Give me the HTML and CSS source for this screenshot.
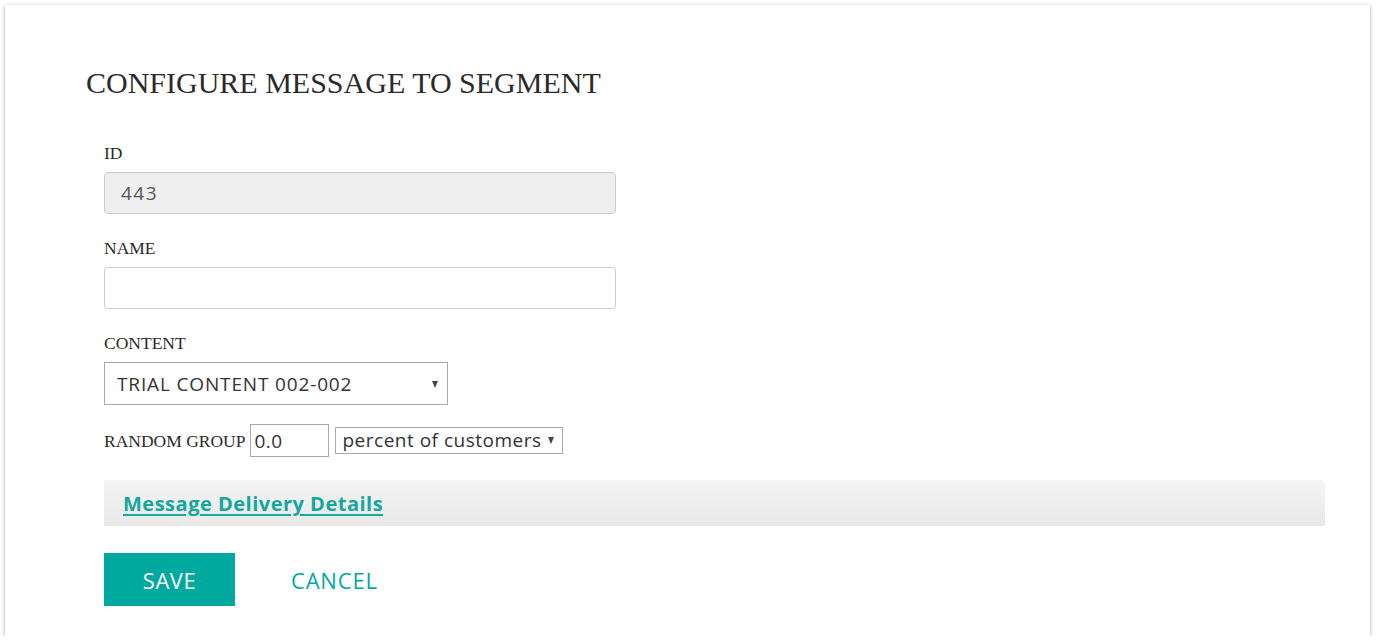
FILE: index.html
```html
<!DOCTYPE html>
<html lang="en">
<head>
<meta charset="utf-8">
<title>Configure Message to Segment</title>
<link rel="stylesheet" href="styles.css">
</head>
<body>
<div class="card">
  <h1 class="title">CONFIGURE MESSAGE TO SEGMENT</h1>
  <form class="form">
    <div class="field">
      <label class="label" for="f-id">ID</label>
      <input class="text-input readonly" id="f-id" type="text" value="443" readonly>
    </div>
    <div class="field">
      <label class="label" for="f-name">NAME</label>
      <input class="text-input" id="f-name" type="text" value="">
    </div>
    <div class="field">
      <label class="label" for="f-content">CONTENT</label>
      <div class="select-wrap content-select">
        <select class="select big" id="f-content">
          <option>TRIAL CONTENT 002-002</option>
        </select>
      </div>
    </div>
    <div class="random-row">
      <label class="label inline" for="f-rand">RANDOM GROUP</label>
      <input class="small-input" id="f-rand" type="text" value="0.0">
      <div class="select-wrap small-select">
        <select class="select small">
          <option>percent of customers</option>
        </select>
      </div>
    </div>
    <div class="details-bar">
      <a class="details-link" href="#">Message Delivery Details</a>
    </div>
    <div class="actions">
      <button class="btn-save" type="button">SAVE</button>
      <a class="btn-cancel" href="#">CANCEL</a>
    </div>
  </form>
</div>
</body>
</html>
```

FILE: styles.css
```css
html, body {
  margin: 0;
  padding: 0;
  background: #ffffff;
}

.card {
  box-sizing: border-box;
  margin: 5px 6px 0 5px;
  height: 631px;
  padding: 61px 45px 0 81px;
  background: #ffffff;
  box-shadow: 0 1px 4px rgba(0, 0, 0, 0.35);
}

.title {
  margin: 0;
  font-family: "Liberation Serif", "Times New Roman", serif;
  font-weight: normal;
  font-size: 30px;
  line-height: 34px;
  color: #2b2b2b;
}

.form {
  margin: 43px 0 0 0;
  padding-left: 18px;
}

.field {
  display: flex;
  flex-direction: column;
  align-items: flex-start;
  margin-bottom: 24px;
}

.label {
  font-family: "Liberation Serif", "Times New Roman", serif;
  font-size: 17.5px;
  line-height: 20px;
  color: #2b2b2b;
  margin-bottom: 9px;
}

.label.inline {
  margin: 0 5px 0 0;
}

.text-input {
  box-sizing: border-box;
  width: 512px;
  height: 42px;
  margin: 0;
  padding: 0 16px;
  border: 1px solid #cccccc;
  border-radius: 4px;
  background: #ffffff;
  font-family: "Open Sans", "Noto Sans", sans-serif;
  font-size: 19px;
  letter-spacing: 1.5px;
  color: #555555;
  outline: none;
}

.text-input.readonly {
  background: #eeeeee;
}

.select-wrap {
  position: relative;
}

.select-wrap::after {
  content: "";
  position: absolute;
  top: 50%;
  margin-top: -3px;
  border-left: 3.5px solid transparent;
  border-right: 3.5px solid transparent;
  border-top: 7px solid #444444;
  pointer-events: none;
}

.content-select::after {
  right: 10px;
}

.small-select::after {
  right: 9px;
  margin-top: -4px;
}

.select {
  -webkit-appearance: none;
  appearance: none;
  box-sizing: border-box;
  margin: 0;
  background: #ffffff;
  border: 1px solid #aaaaaa;
  border-radius: 0;
  font-family: "Open Sans", "Noto Sans", sans-serif;
  color: #333333;
  outline: none;
}

.select.big {
  width: 344px;
  height: 43px;
  padding: 0 12px;
  font-size: 19px;
  letter-spacing: 0.85px;
}

.select.small {
  width: 228px;
  height: 27px;
  padding: 0 6px;
  font-size: 19px;
  letter-spacing: 0.5px;
  line-height: 25px;
}

.random-row {
  display: flex;
  align-items: center;
  margin-top: -5px;
}

.small-input {
  box-sizing: border-box;
  width: 79px;
  height: 33px;
  margin: 0 6px 0 0;
  padding: 0 3px;
  border: 1px solid #aaaaaa;
  border-radius: 0;
  font-family: "Open Sans", "Noto Sans", sans-serif;
  font-size: 19px;
  letter-spacing: 0.5px;
  color: #333333;
  outline: none;
}

.details-bar {
  margin-top: 23px;
  height: 46px;
  display: flex;
  align-items: center;
  padding-left: 19px;
  background: linear-gradient(to bottom, #f4f4f4, #e8e8e8);
  border-radius: 0 4px 0 0;
}

.details-link {
  font-family: "Open Sans", "Noto Sans", sans-serif;
  font-weight: bold;
  font-size: 20px;
  letter-spacing: 0.5px;
  color: #12a89c;
  text-decoration: underline;
  text-decoration-thickness: 2px;
  text-underline-offset: 3px;
}

.actions {
  margin-top: 27px;
  display: flex;
  align-items: center;
}

.btn-save {
  width: 131px;
  height: 53px;
  margin: 0;
  padding: 0;
  border: none;
  border-radius: 0;
  background: #00a99d;
  color: #ffffff;
  font-family: "Open Sans", "Noto Sans", sans-serif;
  font-size: 22px;
  letter-spacing: 0.5px;
  cursor: pointer;
}

.btn-cancel {
  margin-left: 56px;
  font-family: "Open Sans", "Noto Sans", sans-serif;
  font-size: 22px;
  letter-spacing: 0.8px;
  color: #00a99d;
  text-decoration: none;
}
```
